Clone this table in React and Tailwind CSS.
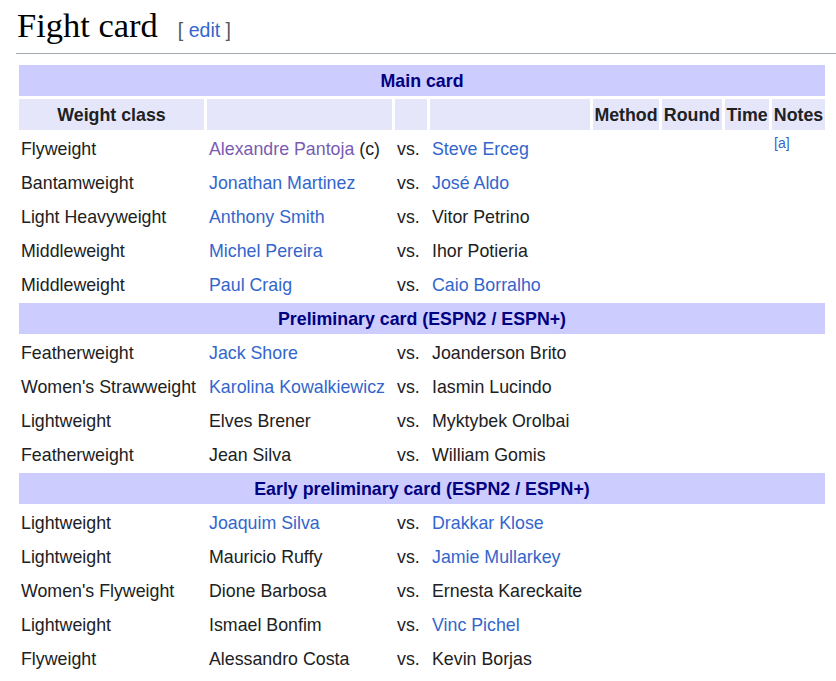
const sections = [
  {
    title: 'Main card',
    fights: [
      { weight: 'Flyweight', a: 'Alexandre Pantoja', aLink: 'visited', aNote: ' (c)', b: 'Steve Erceg', bLink: 'link', note: 'a' },
      { weight: 'Bantamweight', a: 'Jonathan Martinez', aLink: 'link', b: 'José Aldo', bLink: 'link' },
      { weight: 'Light Heavyweight', a: 'Anthony Smith', aLink: 'link', b: 'Vitor Petrino' },
      { weight: 'Middleweight', a: 'Michel Pereira', aLink: 'link', b: 'Ihor Potieria' },
      { weight: 'Middleweight', a: 'Paul Craig', aLink: 'link', b: 'Caio Borralho', bLink: 'link' },
    ],
  },
  {
    title: 'Preliminary card (ESPN2 / ESPN+)',
    fights: [
      { weight: 'Featherweight', a: 'Jack Shore', aLink: 'link', b: 'Joanderson Brito' },
      { weight: "Women's Strawweight", a: 'Karolina Kowalkiewicz', aLink: 'link', b: 'Iasmin Lucindo' },
      { weight: 'Lightweight', a: 'Elves Brener', b: 'Myktybek Orolbai' },
      { weight: 'Featherweight', a: 'Jean Silva', b: 'William Gomis' },
    ],
  },
  {
    title: 'Early preliminary card (ESPN2 / ESPN+)',
    fights: [
      { weight: 'Lightweight', a: 'Joaquim Silva', aLink: 'link', b: 'Drakkar Klose', bLink: 'link' },
      { weight: 'Lightweight', a: 'Mauricio Ruffy', b: 'Jamie Mullarkey', bLink: 'link' },
      { weight: "Women's Flyweight", a: 'Dione Barbosa', b: 'Ernesta Kareckaite' },
      { weight: 'Lightweight', a: 'Ismael Bonfim', b: 'Vinc Pichel', bLink: 'link' },
      { weight: 'Flyweight', a: 'Alessandro Costa', b: 'Kevin Borjas' },
    ],
  },
];

function Name({ text, kind }) {
  if (kind === 'visited') return <a className="text-[#795cb2]">{text}</a>;
  if (kind === 'link') return <a className="text-[#3366cc]">{text}</a>;
  return <span>{text}</span>;
}

const cell = 'h-[31px] px-[2px] pt-[2px] pb-0 align-middle';
const head = 'h-[31px] px-0 pt-[2px] pb-0 bg-[#e6e6fa] text-center font-bold align-middle';

export default function App() {
  return (
    <div className="min-h-[681px] bg-white pl-4 text-[#202122] [font-family:'Liberation_Sans',Arial,sans-serif]">
      <h2 className="flex h-[54px] items-baseline border-b border-[#a2a9b1] pt-[3px] leading-[44px]">
        <span className="pl-[1px] text-[34.5px] text-black [font-family:'Liberation_Serif','Times_New_Roman',serif]">Fight card</span>
        <span className="ml-[20px] text-[19.5px] text-[#54595d]">
          [ <a className="text-[#3366cc]">edit</a> ]
        </span>
      </h2>

      <table className="mt-2 w-[812px] table-fixed border-separate border-spacing-[3px] text-[17.8px] leading-[21px]">
        <colgroup>
          <col className="w-[185px]" />
          <col className="w-[185px]" />
          <col className="w-[32px]" />
          <col className="w-[160px]" />
          <col className="w-[66px]" />
          <col className="w-[60px]" />
          <col className="w-[44px]" />
          <col className="w-[53px]" />
        </colgroup>
        <tbody>
          {sections.map((section, si) => (
            <Section key={section.title} section={section} withHead={si === 0} />
          ))}
        </tbody>
      </table>
    </div>
  );
}

function Section({ section, withHead }) {
  return (
    <>
      <tr>
        <th colSpan={8} className="h-[31px] bg-[#ccccff] px-0 pt-[2px] pb-0 text-center font-bold text-[#000080]">
          {section.title}
        </th>
      </tr>
      {withHead && (
        <tr>
          <th className={head}>Weight class</th>
          <th className={head}></th>
          <th className={head}></th>
          <th className={head}></th>
          <th className={head}>Method</th>
          <th className={head}>Round</th>
          <th className={head}>Time</th>
          <th className={head}>Notes</th>
        </tr>
      )}
      {section.fights.map((fight, i) => (
        <tr key={i}>
          <td className={cell + ' whitespace-nowrap'}>{fight.weight}</td>
          <td className={cell + ' whitespace-nowrap'}>
            <Name text={fight.a} kind={fight.aLink} />
            {fight.aNote}
          </td>
          <td className={cell}>vs.</td>
          <td className={cell + ' whitespace-nowrap'}>
            <Name text={fight.b} kind={fight.bLink} />
          </td>
          <td className={cell}></td>
          <td className={cell}></td>
          <td className={cell}></td>
          <td className={cell}>
            {fight.note && (
              <sup className="text-[14px] text-[#3366cc]">[{fight.note}]</sup>
            )}
          </td>
        </tr>
      ))}
    </>
  );
}
